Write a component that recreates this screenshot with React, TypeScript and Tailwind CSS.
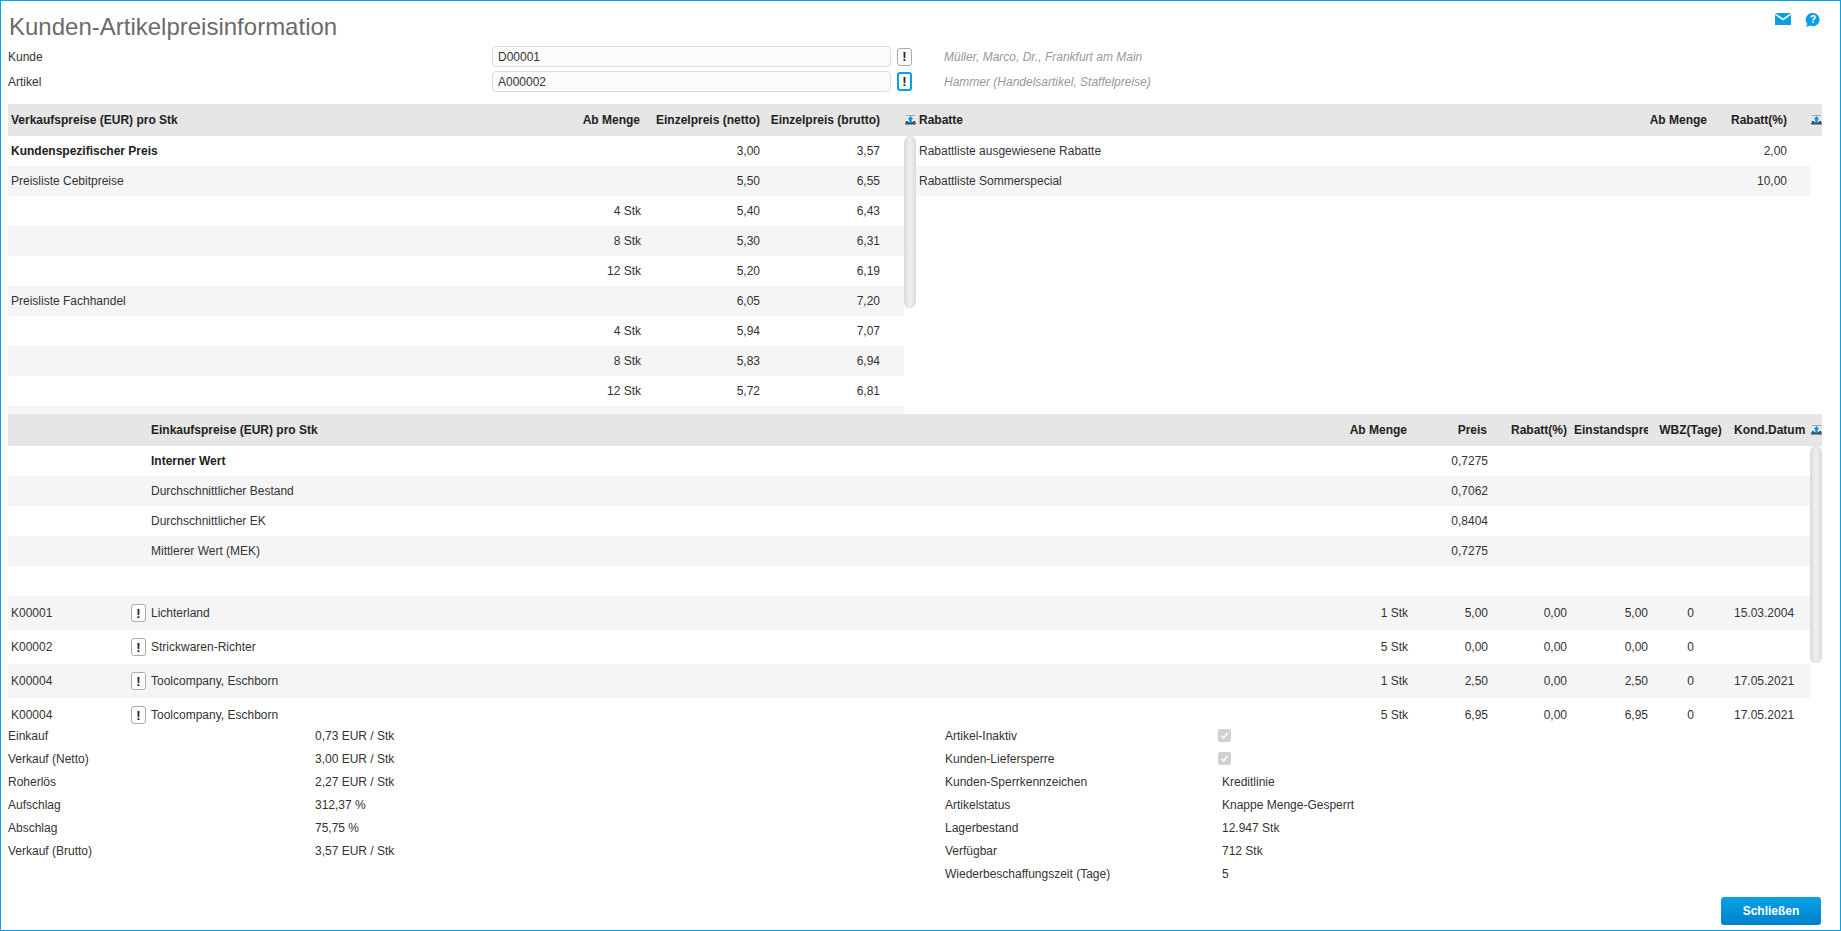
import type { ReactNode } from 'react'

const salesRows = [
  { name: 'Kundenspezifischer Preis', qty: '', net: '3,00', gross: '3,57', bold: true },
  { name: 'Preisliste Cebitpreise', qty: '', net: '5,50', gross: '6,55' },
  { name: '', qty: '4 Stk', net: '5,40', gross: '6,43' },
  { name: '', qty: '8 Stk', net: '5,30', gross: '6,31' },
  { name: '', qty: '12 Stk', net: '5,20', gross: '6,19' },
  { name: 'Preisliste Fachhandel', qty: '', net: '6,05', gross: '7,20' },
  { name: '', qty: '4 Stk', net: '5,94', gross: '7,07' },
  { name: '', qty: '8 Stk', net: '5,83', gross: '6,94' },
  { name: '', qty: '12 Stk', net: '5,72', gross: '6,81' },
  { name: '', qty: '', net: '', gross: '' },
]

const internalRows = [
  { name: 'Interner Wert', price: '0,7275', bold: true },
  { name: 'Durchschnittlicher Bestand', price: '0,7062' },
  { name: 'Durchschnittlicher EK', price: '0,8404' },
  { name: 'Mittlerer Wert (MEK)', price: '0,7275' },
  { name: '', price: '' },
]

const supplierRows = [
  { code: 'K00001', name: 'Lichterland', qty: '1 Stk', price: '5,00', cost: '5,00', date: '15.03.2004' },
  { code: 'K00002', name: 'Strickwaren-Richter', qty: '5 Stk', price: '0,00', cost: '0,00', date: '' },
  { code: 'K00004', name: 'Toolcompany, Eschborn', qty: '1 Stk', price: '2,50', cost: '2,50', date: '17.05.2021' },
  { code: 'K00004', name: 'Toolcompany, Eschborn', qty: '5 Stk', price: '6,95', cost: '6,95', date: '17.05.2021' },
]

const summary = [
  ['Einkauf', '0,73 EUR / Stk'],
  ['Verkauf (Netto)', '3,00 EUR / Stk'],
  ['Roherlös', '2,27 EUR / Stk'],
  ['Aufschlag', '312,37 %'],
  ['Abschlag', '75,75 %'],
  ['Verkauf (Brutto)', '3,57 EUR / Stk'],
]

const stockInfo = [
  ['Kunden-Sperrkennzeichen', 'Kreditlinie'],
  ['Artikelstatus', 'Knappe Menge-Gesperrt'],
  ['Lagerbestand', '12.947 Stk'],
  ['Verfügbar', '712 Stk'],
  ['Wiederbeschaffungszeit (Tage)', '5'],
]

function ExportIcon() {
  return (
    <div className="flex w-[12px] shrink-0 justify-center">
      <svg width="11" height="10" viewBox="0 0 11 10">
        <rect x="1" y="0" width="9" height="7" fill="#e4ecf1" />
        <path d="M1 0H10V1H1Z" fill="#9aa7b0" />
        <path d="M1 6 0 9H11L10 6H8V7H3V6Z" fill="#46525c" />
        <rect x="0" y="9" width="11" height="1" fill="#8a949c" />
        <path d="M5.500 1 8.300 4.300H6.800V8H4.200V4.300H2.700Z" fill="#0a93e0" />
      </svg>
    </div>
  )
}

function InfoButton({ active }: { active?: boolean }) {
  return (
    <button
      className={`flex shrink-0 items-center justify-center rounded-[3px] bg-white text-[13px] leading-none font-bold text-[#222] ${
        active
          ? 'h-[19px] w-[15px] border-2 border-[#0a9fe3]'
          : 'h-[18px] w-[15px] border border-[#aaa]'
      }`}
    >
      !
    </button>
  )
}

function LookupRow({
  label,
  value,
  hint,
  active,
}: {
  label: string
  value: string
  hint: string
  active?: boolean
}) {
  return (
    <div className="flex h-[25px] items-start">
      <div className="flex h-[21px] w-[484px] shrink-0 items-center">{label}</div>
      <div className="flex h-[21px] w-[399px] shrink-0 items-center rounded-[4px] border border-[#ddd] bg-[#fbfbfb] pl-[5px]">
        {value}
      </div>
      <div className="ml-[6px] flex h-[21px] items-center">
        <InfoButton active={active} />
      </div>
      <div className="ml-[32px] flex h-[21px] items-center text-[#999] italic">{hint}</div>
    </div>
  )
}

function Thumb({ height }: { height: string }) {
  return (
    <div className="w-[12px] shrink-0">
      <div
        className={`w-full rounded-full border border-[#dcdcdc] bg-gradient-to-r from-[#dedede] via-[#f0f0f0] to-[#dedede] ${height}`}
      />
    </div>
  )
}

function Band({ children }: { children: ReactNode }) {
  return (
    <div className="flex h-[32px] items-center bg-[#e6e6e6] font-bold text-[#222]">
      {children}
    </div>
  )
}

function Stripe({
  index,
  tall,
  children,
}: {
  index: number
  tall?: boolean
  children: ReactNode
}) {
  return (
    <div
      className={`flex items-center ${tall ? 'h-[34px]' : 'h-[30px]'} ${
        index % 2 === 1 ? 'bg-[#f5f5f5]' : 'bg-white'
      }`}
    >
      {children}
    </div>
  )
}

function SalesTable() {
  return (
    <div className="w-[908px] shrink-0">
      <Band>
        <div className="flex-1 pl-[3px]">Verkaufspreise (EUR) pro Stk</div>
        <div className="w-[120px] pr-[3px] text-right">Ab Menge</div>
        <div className="w-[120px] pr-[3px] text-right">Einzelpreis (netto)</div>
        <div className="w-[120px] pr-[3px] text-right">Einzelpreis (brutto)</div>
        <div className="w-[21px]" />
        <ExportIcon />
      </Band>
      <div className="flex h-[278px] overflow-hidden">
        <div className="flex-1">
          {salesRows.map((row, i) => (
            <Stripe key={i} index={i}>
              <div className={`flex-1 pl-[3px] ${row.bold ? 'font-bold text-[#222]' : ''}`}>
                {row.name}
              </div>
              <div className="w-[120px] pr-[2px] text-right">{row.qty}</div>
              <div className="w-[120px] pr-[3px] text-right">{row.net}</div>
              <div className="w-[120px] pr-[3px] text-right">{row.gross}</div>
              <div className="w-[21px]" />
            </Stripe>
          ))}
        </div>
        <Thumb height="h-[172px]" />
      </div>
    </div>
  )
}

function DiscountTable() {
  return (
    <div className="w-[906px] shrink-0">
      <Band>
        <div className="flex-1 pl-[3px]">Rabatte</div>
        <div className="w-[80px] pr-[3px] text-right">Ab Menge</div>
        <div className="w-[80px] pr-[3px] text-right">Rabatt(%)</div>
        <div className="w-[20px]" />
        <ExportIcon />
      </Band>
      <div className="w-[894px]">
        <Stripe index={0}>
          <div className="flex-1 pl-[3px]">Rabattliste ausgewiesene Rabatte</div>
          <div className="w-[80px] pr-[3px] text-right">2,00</div>
          <div className="w-[20px]" />
        </Stripe>
        <Stripe index={1}>
          <div className="flex-1 pl-[3px]">Rabattliste Sommerspecial</div>
          <div className="w-[80px] pr-[3px] text-right">10,00</div>
          <div className="w-[20px]" />
        </Stripe>
      </div>
    </div>
  )
}

function PurchaseCells({
  qty,
  price,
  discount,
  cost,
  wbz,
  date,
}: {
  qty?: string
  price?: string
  discount?: string
  cost?: string
  wbz?: string
  date?: string
}) {
  return (
    <>
      <div className="w-[80px] pr-[2px] text-right">{qty}</div>
      <div className="w-[80px] pr-[2px] text-right">{price}</div>
      <div className="w-[80px] pr-[3px] text-right">{discount}</div>
      <div className="w-[80px] pr-[2px] text-right">{cost}</div>
      <div className="w-[81px] text-center">{wbz}</div>
      <div className="w-[79px] pl-[3px]">{date}</div>
    </>
  )
}

function PurchaseTable() {
  return (
    <div className="w-[1814px] shrink-0">
      <Band>
        <div className="w-[143px] shrink-0" />
        <div className="flex-1">Einkaufspreise (EUR) pro Stk</div>
        <div className="w-[80px] pr-[3px] text-right">Ab Menge</div>
        <div className="w-[80px] pr-[3px] text-right">Preis</div>
        <div className="w-[80px] pr-[3px] text-right">Rabatt(%)</div>
        <div className="w-[80px] pl-[4px]">
          <div className="w-[74px] overflow-hidden whitespace-nowrap">Einstandspreis</div>
        </div>
        <div className="w-[81px] text-center">WBZ(Tage)</div>
        <div className="w-[79px] pl-[3px]">Kond.Datum</div>
        <ExportIcon />
      </Band>
      <div className="flex h-[278px] overflow-hidden">
        <div className="flex-1">
          {internalRows.map((row, i) => (
            <Stripe key={i} index={i}>
              <div className="w-[143px] shrink-0" />
              <div className={`flex-1 ${row.bold ? 'font-bold text-[#222]' : ''}`}>{row.name}</div>
              <PurchaseCells price={row.price} />
            </Stripe>
          ))}
          {supplierRows.map((row, i) => (
            <Stripe key={i} index={i + 1} tall>
              <div className="w-[123px] shrink-0 pl-[3px]">{row.code}</div>
              <div className="w-[20px] shrink-0">
                <InfoButton />
              </div>
              <div className="flex-1">{row.name}</div>
              <PurchaseCells
                qty={row.qty}
                price={row.price}
                discount="0,00"
                cost={row.cost}
                wbz="0"
                date={row.date}
              />
            </Stripe>
          ))}
        </div>
        <Thumb height="h-[217px]" />
      </div>
    </div>
  )
}

function CheckBox() {
  return (
    <div className="flex h-[13px] w-[13px] items-center justify-center rounded-[2px] bg-[#d0d0d0]">
      <svg width="9" height="9" viewBox="0 0 9 9" fill="none" stroke="#fff" strokeWidth="1.6">
        <path d="M1.5 4.8 3.6 7 7.5 2" />
      </svg>
    </div>
  )
}

function Footer() {
  return (
    <div className="flex flex-1">
      <div className="w-[937px] shrink-0">
        {summary.map(([label, value]) => (
          <div key={label} className="flex h-[23px] items-center">
            <div className="w-[307px] shrink-0">{label}</div>
            <div>{value}</div>
          </div>
        ))}
      </div>
      <div>
        <div className="flex h-[23px] items-center">
          <div className="w-[273px] shrink-0">Artikel-Inaktiv</div>
          <CheckBox />
        </div>
        <div className="flex h-[23px] items-center">
          <div className="w-[273px] shrink-0">Kunden-Liefersperre</div>
          <CheckBox />
        </div>
        {stockInfo.map(([label, value]) => (
          <div key={label} className="flex h-[23px] items-center">
            <div className="w-[277px] shrink-0">{label}</div>
            <div>{value}</div>
          </div>
        ))}
      </div>
    </div>
  )
}

export default function App() {
  return (
    <div className="relative flex h-[931px] w-[1841px] flex-col overflow-hidden border border-[#00a5ec] bg-white pl-[7px] font-['Liberation_Sans',Arial,sans-serif] text-[12px] text-[#333]">
      <div className="absolute top-[12px] right-[20px] flex items-start gap-[14px]">
        <svg width="16" height="12" viewBox="0 0 16 12">
          <path d="M0 0H16L8 5.5Z M0 1.8 8 7.4 16 1.8V12H0Z" fill="#0a9fe3" />
        </svg>
        <svg width="15" height="14" viewBox="0 0 15 14">
          <path
            d="M8 0a6.6 6.6 0 0 1 0 13.2c-1 0-2-.2-2.800-.6C4 13.400 2.500 13.800 .6 13.800c.9-.8 1.500-1.800 1.700-3A6.600 6.600 0 0 1 8 0Z"
            fill="#0a9fe3"
          />
          <text
            x="8"
            y="10.200"
            textAnchor="middle"
            fontSize="10"
            fontWeight="700"
            fill="#fff"
            fontFamily="Liberation Sans, sans-serif"
          >
            ?
          </text>
        </svg>
      </div>
      <h1 className="ml-[1px] h-[45px] pt-[12px] text-[24px] leading-[28px] font-normal text-[#6b6b6b]">
        Kunden-Artikelpreisinformation
      </h1>
      <LookupRow
        label="Kunde"
        value="D00001"
        hint="Müller, Marco, Dr., Frankfurt am Main"
      />
      <LookupRow
        label="Artikel"
        value="A000002"
        hint="Hammer (Handelsartikel, Staffelpreise)"
        active
      />
      <div className="h-[8px]" />
      <div className="flex">
        <SalesTable />
        <DiscountTable />
      </div>
      <PurchaseTable />
      <Footer />
      <div className="flex justify-end pr-[19px] pb-[5px]">
        <button className="h-[28px] w-[100px] rounded-[3px] bg-gradient-to-b from-[#0ba3e4] to-[#0080cc] font-bold text-white">
          Schließen
        </button>
      </div>
    </div>
  )
}
